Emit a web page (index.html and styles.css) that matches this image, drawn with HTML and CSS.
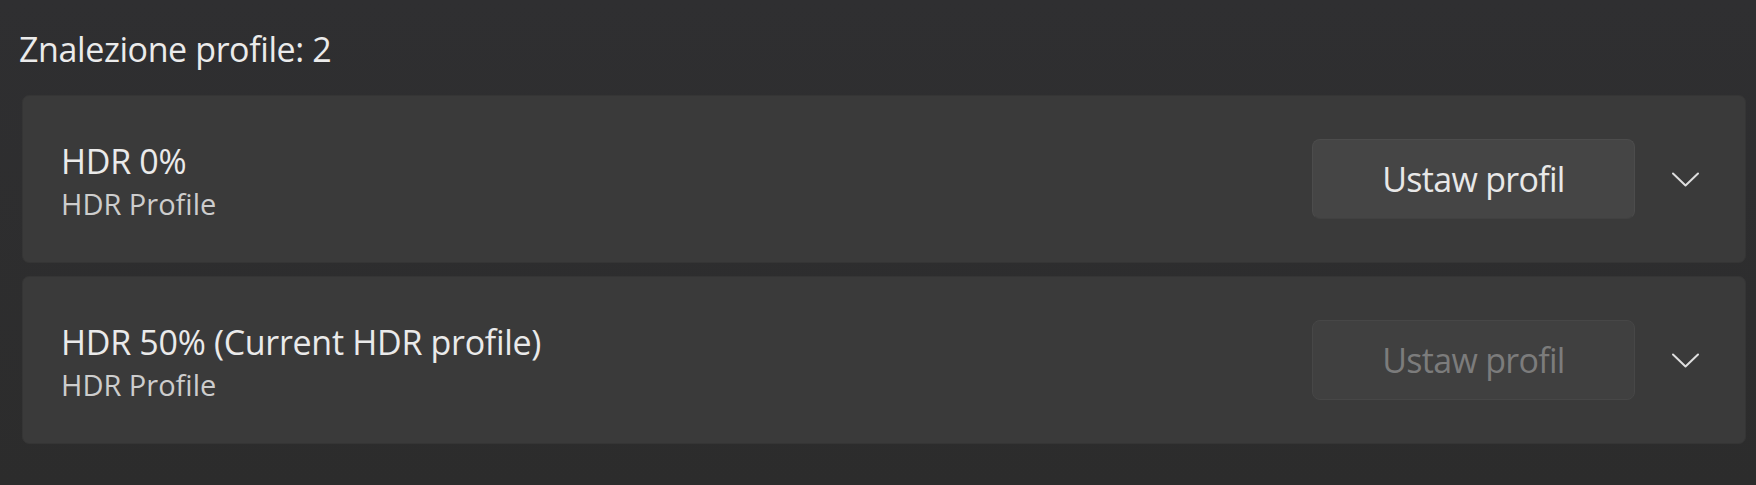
FILE: index.html
```html
<!DOCTYPE html>
<html lang="pl">
<head>
<meta charset="utf-8">
<title>Profile HDR</title>
<link rel="stylesheet" href="styles.css">
</head>
<body>
<main class="page">
  <h1 class="heading">Znalezione profile: 2</h1>
  <section class="card">
    <div class="card-text">
      <div class="card-title">HDR 0%</div>
      <div class="card-sub">HDR Profile</div>
    </div>
    <button class="btn" type="button">Ustaw profil</button>
    <svg class="chevron" width="27" height="15" viewBox="0 0 27 15" aria-hidden="true"><polyline points="1,1.5 13.5,13.5 26,1.5" fill="none" stroke="currentColor" stroke-width="2" stroke-linecap="round" stroke-linejoin="round"/></svg>
  </section>
  <section class="card">
    <div class="card-text">
      <div class="card-title">HDR 50% (Current HDR profile)</div>
      <div class="card-sub">HDR Profile</div>
    </div>
    <button class="btn btn-disabled" type="button" disabled>Ustaw profil</button>
    <svg class="chevron" width="27" height="15" viewBox="0 0 27 15" aria-hidden="true"><polyline points="1,1.5 13.5,13.5 26,1.5" fill="none" stroke="currentColor" stroke-width="2" stroke-linecap="round" stroke-linejoin="round"/></svg>
  </section>
</main>
</body>
</html>
```

FILE: styles.css
```css
html, body {
  margin: 0;
  padding: 0;
  height: 100%;
}
body {
  background: linear-gradient(180deg, #2f2f31 0%, #2c2c2c 100%);
  font-family: "Open Sans", "Noto Sans", sans-serif;
  color: #e8e8e8;
  overflow: hidden;
}
.page {
  display: flex;
  flex-direction: column;
  padding: 26px 10px 0 22px;
  gap: 13px;
}
.heading {
  margin: 0 0 10px -3px;
  font-size: 34px;
  font-weight: 400;
  line-height: 46px;
  letter-spacing: -0.4px;
  color: #ebebeb;
}
.card {
  display: flex;
  align-items: center;
  height: 168px;
  box-sizing: border-box;
  padding: 0 46px 0 38px;
  background: #3a3a3a;
  border: 1px solid #353535;
  border-radius: 7px;
}
.card-text {
  flex: 1;
  display: flex;
  flex-direction: column;
  padding-top: 4px;
}
.card-title {
  font-size: 34px;
  line-height: 40px;
  letter-spacing: -0.3px;
  color: #eaeaea;
}
.card-sub {
  margin-top: 5px;
  font-size: 29px;
  line-height: 36px;
  letter-spacing: 0;
  color: #cdcdcd;
}
.btn {
  width: 323px;
  height: 80px;
  margin-right: 37px;
  padding: 0;
  box-sizing: border-box;
  background: #454545;
  border: 1px solid #4c4c4c;
  border-bottom-color: #414141;
  border-radius: 8px;
  font-family: inherit;
  font-size: 34px;
  letter-spacing: -0.7px;
  color: #e8e8e8;
}
.btn-disabled {
  background: #404040;
  border-color: #474747;
  color: #7c7c7c;
}
.chevron {
  flex: none;
  color: #dedede;
}
```
